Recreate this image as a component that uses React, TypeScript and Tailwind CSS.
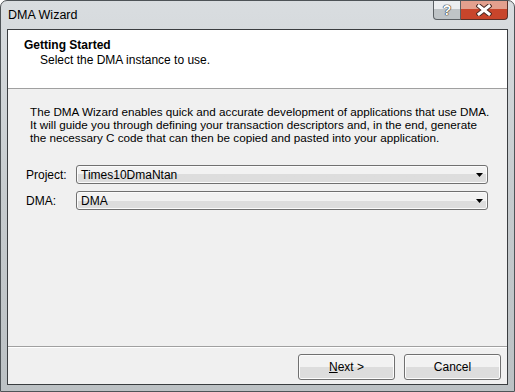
import React from 'react';

const Combo: React.FC<{ value: string }> = ({ value }) => {
    return (
        <div className="relative w-[412px] h-[19px] rounded-[3px] border border-[#707070] bg-gradient-to-b from-[#f2f2f2] from-50% to-[#dddddd] to-50% shadow-[inset_0_0_0_1px_#fbfbfb] flex items-center pl-[4px]">
            <span className="leading-none">{value}</span>
            <svg className="absolute right-[4px] top-[7px]" width="7" height="4" viewBox="0 0 7 4">
                <path d="M0 0h7L3.5 4z" fill="#000" />
            </svg>
        </div>
    );
};

const Button: React.FC<{ children: React.ReactNode }> = ({ children }) => {
    return (
        <div className="w-[97px] h-[26px] rounded-[3px] border border-[#707070] bg-gradient-to-b from-[#f2f2f2] from-50% to-[#dddddd] to-50% shadow-[inset_0_0_0_1px_#fcfcfc] flex items-center justify-center">
            {children}
        </div>
    );
};

export default function App() {
    return (
        <div className="w-[515px] h-[392px] bg-white font-['Liberation_Sans',Arial,sans-serif] text-[12px] text-black">
            <div className="w-full h-full flex flex-col rounded-t-[7px] border border-[#4e5357] bg-gradient-to-b from-[#d9dde0] via-[#c6cbce] to-[#bcc1c4] overflow-hidden">
                {/* title bar */}
                <div className="h-[28px] flex items-start justify-between pl-[7px] pr-[6px]">
                    <span className="mt-[7px] text-[12.5px] leading-[14px]">DMA Wizard</span>
                    <div className="flex">
                        <div className="w-[28px] h-[19px] rounded-bl-[4px] border border-t-0 border-[#5b6064] bg-gradient-to-b from-[#eceef0] from-45% to-[#bfc4c7] to-45% flex items-center justify-center">
                            <span className="font-bold text-[14px] leading-none text-white [text-shadow:0_0_1px_#2a2a2a,0_0_1px_#2a2a2a,0_0_1px_#2a2a2a]">?</span>
                        </div>
                        <div className="w-[47px] h-[19px] rounded-br-[4px] border border-l-0 border-t-0 border-[#5b3028] bg-gradient-to-b from-[#e3a08e] from-45% to-[#c8452b] to-45% flex items-center justify-center">
                            <svg width="16" height="12" viewBox="0 0 16 12">
                                <path d="M3 2l10 8M13 2l-10 8" stroke="#4a2a24" strokeWidth="5" strokeLinecap="square" />
                                <path d="M3 2l10 8M13 2l-10 8" stroke="#fff" strokeWidth="3" strokeLinecap="square" />
                            </svg>
                        </div>
                    </div>
                </div>

                {/* client area */}
                <div className="flex-1 mx-[6px] mb-[6px] border border-[#3a3d40] bg-[#f0f0f0] flex flex-col">
                    <div className="h-[59px] bg-white border-b border-[#a0a0a0] pl-[16px] pt-[8px]">
                        <div className="font-bold leading-[14px]">Getting Started</div>
                        <div className="pl-[16px] leading-[14px] mt-[1px]">Select the DMA instance to use.</div>
                    </div>

                    <div className="flex-1 pl-[22px] pt-[16px]">
                        <p className="text-[11.7px] leading-[13px]">
                            The DMA Wizard enables quick and accurate development of applications that use DMA.<br />
                            It will guide you through defining your transaction descriptors and, in the end, generate<br />
                            the necessary C code that can then be copied and pasted into your application.
                        </p>
                        <div className="mt-[21px] -ml-[4px] flex flex-col gap-[7px]">
                            <div className="flex items-center">
                                <span className="w-[50px]">Project:</span>
                                <Combo value="Times10DmaNtan" />
                            </div>
                            <div className="flex items-center">
                                <span className="w-[50px]">DMA:</span>
                                <Combo value="DMA" />
                            </div>
                        </div>
                    </div>

                    <div className="h-[38px] border-t border-[#a0a0a0] shadow-[inset_0_1px_0_#ffffff] flex items-start justify-end gap-[9px] pt-[7px] pr-[6px]">
                        <Button>
                            <span><span className="underline">N</span>ext &gt;</span>
                        </Button>
                        <Button>Cancel</Button>
                    </div>
                </div>
            </div>
        </div>
    );
}
